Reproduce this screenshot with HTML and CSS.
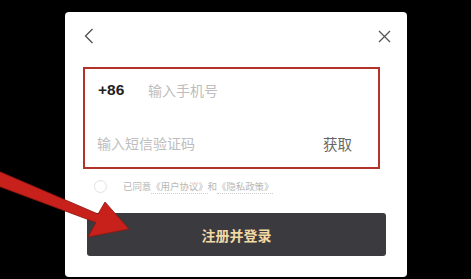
FILE: index.html
```html
<!DOCTYPE html>
<html lang="zh-CN">
<head>
<meta charset="utf-8">
<title>注册并登录</title>
<link rel="stylesheet" href="styles.css">
</head>
<body>
<div class="page">
  <div class="modal">
    <div class="header">
      <svg class="icon-back" width="10" height="16" viewBox="0 0 10 16"><path d="M8.5 1 L1.5 8 L8.5 15" fill="none" stroke="#555" stroke-width="1.4"/></svg>
      <svg class="icon-close" width="13" height="13" viewBox="0 0 13 13"><path d="M1 1 L12 12 M12 1 L1 12" fill="none" stroke="#555" stroke-width="1.3"/></svg>
    </div>
    <div class="form">
      <div class="row">
        <span class="code">+86</span>
        <span class="placeholder">输入手机号</span>
      </div>
      <div class="row row-code">
        <span class="placeholder">输入短信验证码</span>
        <span class="get">获取</span>
      </div>
    </div>
    <div class="agree">
      <span class="check"></span>
      <span class="agree-text">已同意<span class="link">《用户协议》</span>和<span class="link">《隐私政策》</span></span>
    </div>
    <div class="btn">注册并登录</div>
  </div>
  <svg class="arrow" width="471" height="279" viewBox="0 0 471 279">
    <polygon points="-2,171 98,214 105,202 129,229 88,237 96,222.5 -2,186" fill="#c8211b" stroke="#8e1510" stroke-width="0.8"/>
  </svg>
</div>
</body>
</html>
```
FILE: styles.css
```css
html, body {
  margin: 0;
  padding: 0;
  background: #000;
}
body {
  font-family: "Noto Sans CJK SC", "Noto Sans", sans-serif;
}
.page {
  position: relative;
  width: 471px;
  height: 279px;
  padding: 12px 0 0 65px;
  box-sizing: border-box;
  overflow: hidden;
}
.modal {
  width: 342px;
  height: 265px;
  background: #fff;
  border-radius: 4px;
  display: flex;
  flex-direction: column;
}
.header {
  height: 48px;
  display: flex;
  align-items: center;
  justify-content: space-between;
  padding: 0 16px 0 19px;
}
.form {
  margin: 7px 0 0 18px;
  width: 297px;
  height: 102px;
  box-sizing: border-box;
  border: 2px solid #b3322a;
  padding: 1px 26px 4px 12px;
  display: flex;
  flex-direction: column;
  gap: 13px;
}
.row {
  height: 40px;
  display: flex;
  align-items: center;
}
.row-code {
  justify-content: space-between;
}
.code {
  font-family: "Liberation Sans", sans-serif;
  font-size: 15.5px;
  font-weight: 700;
  color: #222;
  margin-left: 1px;
  width: 50px;
}
.placeholder {
  font-size: 14px;
  color: #bdbdbd;
}
.get {
  font-size: 14.5px;
  color: #666;
}
.agree {
  margin: 10px 0 0 29px;
  height: 14px;
  display: flex;
  align-items: center;
}
.check {
  width: 11px;
  height: 11px;
  border: 1px solid #e2e2e2;
  border-radius: 50%;
  margin-right: 16px;
}
.agree-text {
  font-size: 9.5px;
  color: #b8b8b8;
  letter-spacing: -0.1px;
}
.link {
  border-bottom: 1px dotted #cfcfcf;
}
.btn {
  margin: 20px 0 0 22px;
  width: 299px;
  height: 43px;
  background: #3b3b3f;
  border-radius: 3px;
  color: #f2d8a3;
  font-size: 14px;
  font-weight: 700;
  display: flex;
  align-items: center;
  justify-content: center;
}
.arrow {
  position: absolute;
  left: 0;
  top: 0;
  pointer-events: none;
}
```
